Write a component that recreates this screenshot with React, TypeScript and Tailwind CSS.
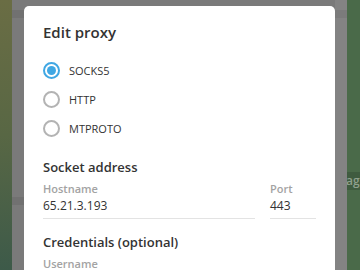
export default function App() {
  return (
    <div
      className="flex h-[270px] w-[360px] overflow-hidden"
      style={{ fontFamily: '"Open Sans", "Noto Sans", sans-serif' }}
    >
      <div className="w-[12px] shrink-0 bg-gradient-to-b from-[#6a6d44] via-[#586744] to-[#3d5a49]" />
      <div className="flex w-[12px] shrink-0 flex-col bg-[#7a7a7a]">
        <div className="mt-[10px] h-[8px] bg-[#717171]" />
        <div className="mt-[179px] h-[8px] bg-[#717171]" />
      </div>
      <div className="flex w-[311px] shrink-0 flex-col bg-[#7a7a7a] pt-[6px]">
        <div className="flex-1 rounded-t-[5px] bg-white px-[19px] text-[#333333]">
          <div className="pt-[16px] text-[15px] font-semibold leading-[20px]">Edit proxy</div>

          <div className="mt-[14px] flex flex-col">
            <Radio label="SOCKS5" checked />
            <Radio label="HTTP" />
            <Radio label="MTPROTO" />
          </div>

          <div className="mt-[14px] text-[13px] font-semibold leading-[20px]">Socket address</div>
          <div className="mt-[5px] flex gap-[15px]">
            <Field label="Hostname" value="65.21.3.193" className="w-[212px]" />
            <Field label="Port" value="443" className="w-[46px]" />
          </div>

          <div className="mt-[13px] text-[13px] font-semibold leading-[20px]">Credentials (optional)</div>
          <div className="mt-[5px] text-[11px] font-semibold leading-[14px] text-[#a3a3a3]">Username</div>
        </div>
      </div>
      <div className="w-[12px] shrink-0 bg-[#838383]">
        <div className="mt-[10px] h-[8px] bg-[#7b7b7b]" />
      </div>
      <div className="flex w-[13px] shrink-0 flex-col bg-[#4a6a49]">
        <div className="mt-[172px] flex h-[18px] items-center overflow-hidden bg-[#3f5b3f] text-[12px] font-semibold text-[#8fa08d]">
          <span className="-ml-[1px]">agi</span>
        </div>
      </div>
    </div>
  );
}

function Radio({ label, checked }: { label: string; checked?: boolean }) {
  return (
    <div className="flex h-[29px] items-center">
      <div
        className={
          checked
            ? "flex h-[17px] w-[17px] items-center justify-center rounded-full border-2 border-[#40a7e3]"
            : "h-[17px] w-[17px] rounded-full border-2 border-[#b3b3b3]"
        }
      >
        {checked ? <div className="h-[9px] w-[9px] rounded-full bg-[#40a7e3]" /> : null}
      </div>
      <span className="ml-[9px] text-[11px] leading-[14px]">{label}</span>
    </div>
  );
}

function Field({ label, value, className }: { label: string; value: string; className: string }) {
  return (
    <div className={className}>
      <div className="text-[11px] font-semibold leading-[14px] text-[#a3a3a3]">{label}</div>
      <div className="mt-[1px] border-b border-[#e3e3e3] pb-[3px] text-[12px] leading-[18px]">{value}</div>
    </div>
  );
}
